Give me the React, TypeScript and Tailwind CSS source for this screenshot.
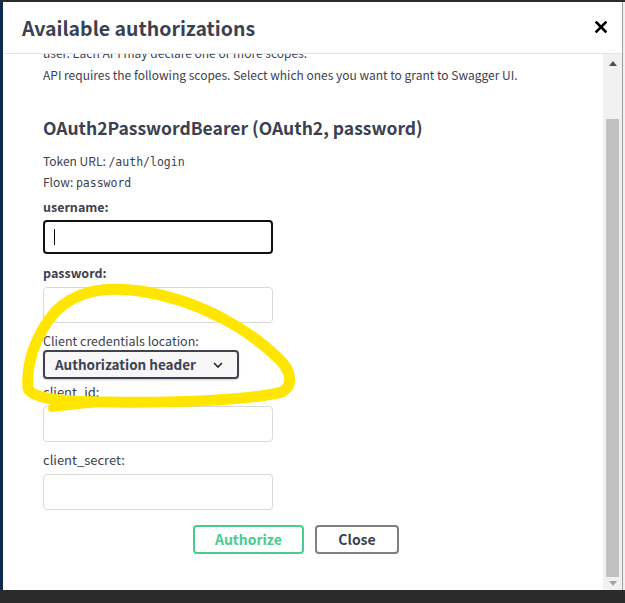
const font = { fontFamily: '"Noto Sans CJK KR", "Noto Sans", sans-serif' };
const mono = { fontFamily: '"DejaVu Sans Mono", monospace' };

function Field({ label, bold, focused, mt }: { label: string; bold?: boolean; focused?: boolean; mt: string }) {
  return (
    <>
      <div className={`${mt} h-[18px] leading-[18px] text-[#3b4151] ${bold ? "text-[12.5px] font-semibold" : "text-[13px]"}`}>
        {label}
      </div>
      {focused ? (
        <div className="mt-[4px] h-[34px] w-[230px] rounded-[4px] border-2 border-[#111] bg-white flex items-center pl-[9px]">
          <span className="block w-px h-[16px] bg-black" />
        </div>
      ) : (
        <div className="mt-[5px] h-[36px] w-[230px] rounded-[4px] border border-[#d9d9d9] bg-white" />
      )}
    </>
  );
}

export default function App() {
  return (
    <div className="relative w-[625px] h-[603px] bg-[#2b2b2b] overflow-hidden" style={font}>
      <div className="flex h-[590px] pt-[2px]">
        <div className="w-[3px] bg-[#0d2b4e]" />
        <div className="flex-1 bg-white flex flex-col">
          {/* header */}
          <div className="relative z-10 h-[52px] shrink-0 bg-white border-b border-[#e5e5e5] flex items-center justify-between pl-[19px] pr-[15px]">
            <h3 className="text-[19.5px] font-semibold text-[#3b4151] leading-none">Available authorizations</h3>
            <svg width="12" height="12" viewBox="0 0 12 12" className="mb-[2px]">
              <path d="M1.5 1.5 L10.5 10.5 M10.5 1.5 L1.5 10.5" stroke="#000" strokeWidth="2.6" strokeLinecap="square" />
            </svg>
          </div>
          {/* body */}
          <div className="flex-1 flex min-h-0">
            <div className="flex-1 overflow-hidden pl-[40px] text-[#3b4151]">
              <div className="-mt-[11px] h-[20px] leading-[20px] text-[12px]">user. Each API may declare one or more scopes.</div>
              <div className="mt-[2px] h-[20px] leading-[20px] text-[12px]">
                API requires the following scopes. Select which ones you want to grant to Swagger UI.
              </div>
              <div className="mt-[30px] h-[26px] leading-[26px] text-[17.5px] font-bold">OAuth2PasswordBearer (OAuth2, password)</div>
              <div className="mt-[11px] h-[18px] leading-[18px] text-[12px]">
                Token URL: <code className="text-[11.5px]" style={mono}>/auth/login</code>
              </div>
              <div className="mt-[3px] h-[18px] leading-[18px] text-[12px]">
                Flow: <code className="text-[11.5px]" style={mono}>password</code>
              </div>
              <Field label="username:" bold focused mt="mt-[7px]" />
              <Field label="password:" bold mt="mt-[10px]" />
              <div className="mt-[9px] h-[18px] leading-[18px] text-[12.5px]">Client credentials location:</div>
              <div className="h-[29px] w-[196px] rounded-[4px] border-2 border-[#41444e] bg-[#f7f7f7] flex items-center justify-between pl-[10px] pr-[14px] shadow-[0_1px_2px_rgba(0,0,0,0.2)]">
                <span className="text-[13.5px] font-semibold text-[#3b4151]">Authorization header</span>
                <svg width="10" height="6" viewBox="0 0 10 6">
                  <path d="M1 1 L5 5 L9 1" stroke="#222" strokeWidth="1.6" fill="none" />
                </svg>
              </div>
              <Field label="client_id:" mt="mt-[4px]" />
              <Field label="client_secret:" mt="mt-[9px]" />
              <div className="mt-[15px] flex gap-[11px] pl-[150px]">
                <button className="h-[29px] w-[111px] rounded-[4px] border-2 border-[#49cc90] text-[14px] font-bold text-[#49cc90] bg-white">
                  Authorize
                </button>
                <button className="h-[29px] w-[84px] rounded-[4px] border-2 border-[#808080] text-[14px] font-bold text-[#3b4151] bg-white">
                  Close
                </button>
              </div>
            </div>
            {/* scrollbar */}
            <div className="w-[19px] bg-[#f1f1f1] flex flex-col items-center">
              <div className="h-[17px] flex items-center justify-center mt-[1px]">
                <svg width="8" height="5" viewBox="0 0 8 5"><path d="M0 5 L4 0 L8 5 Z" fill="#505050" /></svg>
              </div>
              <div className="mt-[47px] w-[13px] h-[458px] bg-[#c1c1c1]" />
              <div className="flex-1 flex items-center justify-center">
                <svg width="8" height="5" viewBox="0 0 8 5"><path d="M0 0 L4 5 L8 0 Z" fill="#a3a3a3" /></svg>
              </div>
            </div>
          </div>
        </div>
        <div className="w-[3px] bg-[#f0f0f0] border-l border-[#a0a0a0]" />
      </div>
      {/* yellow highlight scribble */}
      <svg className="absolute inset-0 pointer-events-none" width="625" height="603" viewBox="0 0 625 603">
        <path
          d="M282 392 C 293 386, 292 372, 280 360 C 250 330, 200 300, 140 291 C 100 286, 75 292, 55 312 C 35 335, 26 365, 28 388 C 30 398, 60 402, 110 402 C 180 403, 250 400, 282 392"
          stroke="#ffe600"
          strokeWidth="11"
          fill="none"
          strokeLinecap="round"
          strokeLinejoin="round"
        />
        <path d="M52 408 C 68 406, 84 404, 100 403" stroke="#ffe600" strokeWidth="8" fill="none" strokeLinecap="round" />
      </svg>
    </div>
  );
}
